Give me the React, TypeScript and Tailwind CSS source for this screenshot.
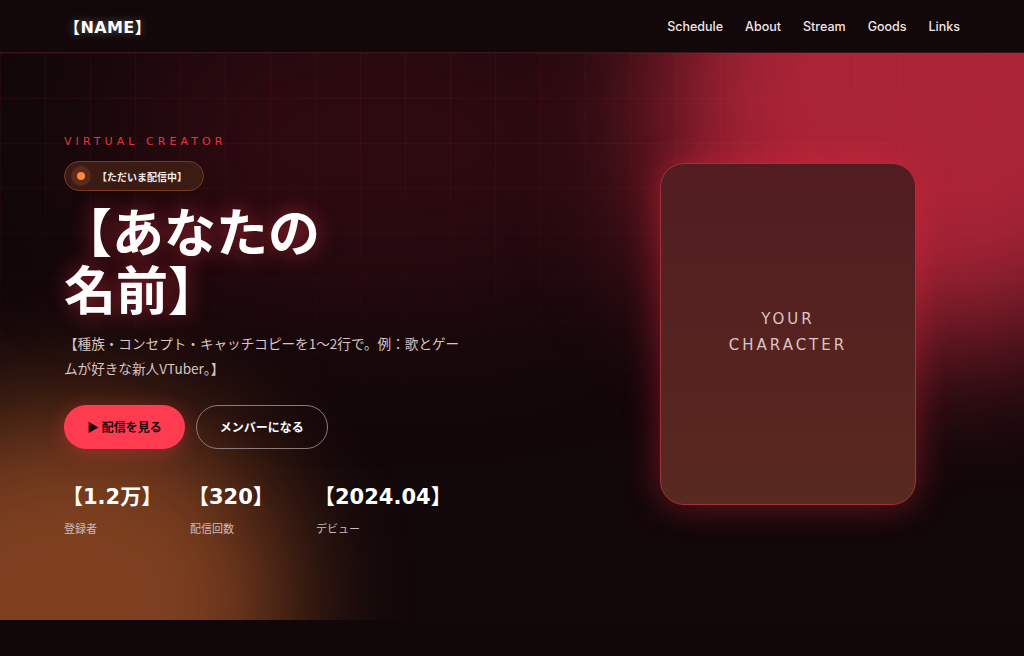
import React from 'react';

const jp = '"Noto Sans CJK JP", "Noto Sans", sans-serif';
const display = '"DejaVu Sans", "Noto Sans CJK JP", sans-serif';

const navItems = ['Schedule', 'About', 'Stream', 'Goods', 'Links'];

const stats = [
  { value: '【1.2万】', label: '登録者' },
  { value: '【320】', label: '配信回数' },
  { value: '【2024.04】', label: 'デビュー' }
];

const Header: React.FC = () => (
  <header className="h-[53px] bg-[#120709] border-b border-[#3a161c]">
    <div className="h-full px-16 pt-[3px] flex items-center justify-between">
      <a
        className="text-white text-[16px] font-bold tracking-wide [text-shadow:0_0_8px_rgba(255,255,255,0.35)]"
        style={{ fontFamily: display }}
      >
        【NAME】
      </a>
      <nav className="flex items-center gap-[22px]">
        {navItems.map((item) => (
          <a
            key={item}
            className="text-[12.5px] font-medium text-[#f2e6e6]"
            style={{ fontFamily: '"Inter", sans-serif' }}
          >
            {item}
          </a>
        ))}
      </nav>
    </div>
  </header>
);

const LiveBadge: React.FC = () => (
  <div className="inline-flex items-center gap-[6px] h-[30px] pl-[6px] pr-[16px] rounded-full bg-[#3a1c14] border border-[#7a3a22]">
    <span className="w-[20px] h-[20px] rounded-full bg-[#5a2a1c] flex items-center justify-center">
      <span className="w-[8px] h-[8px] rounded-full bg-[#ff8a3a]" />
    </span>
    <span className="text-[10px] font-bold text-[#f5ece8]">【ただいま配信中】</span>
  </div>
);

const Hero: React.FC = () => (
  <section className="relative h-[567px] overflow-hidden bg-[#120709]">
    {/* glows */}
    <div className="absolute -top-[170px] right-[-170px] w-[560px] h-[460px] rounded-full bg-[#b3263a] blur-[70px] opacity-95" />
    <div className="absolute top-[-60px] left-[120px] w-[520px] h-[300px] rounded-full bg-[#3a0c14] blur-[80px] opacity-70" />
    <div className="absolute bottom-[-170px] left-[-150px] w-[440px] h-[380px] rounded-full bg-[#8a4622] blur-[60px] opacity-90" />
    {/* grid */}
    <div className="absolute inset-0 bg-[linear-gradient(rgba(255,70,90,0.07)_1px,transparent_1px),linear-gradient(90deg,rgba(255,70,90,0.07)_1px,transparent_1px)] bg-[size:45px_45px] [mask-image:linear-gradient(to_bottom,black,transparent_70%)]" />

    <div className="relative h-full px-16 flex items-center justify-between">
      <div className="w-[408px]" style={{ fontFamily: jp }}>
        <p
          className="text-[11px] tracking-[0.37em] text-[#e8323f] leading-none"
          style={{ fontFamily: display }}
        >
          VIRTUAL CREATOR
        </p>
        <div className="mt-[14px]">
          <LiveBadge />
        </div>
        <h1 className="mt-[10px] text-[52px] font-bold leading-[58px] text-white [text-shadow:0_0_22px_rgba(255,60,80,0.55)]">
          <span className="block -ml-[4px]">【あなたの</span>
          <span className="block">名前】</span>
        </h1>
        <p className="mt-[14px] max-w-[400px] text-[13.6px] leading-[25px] text-[#d6c6c6]">
          【種族・コンセプト・キャッチコピーを1〜2行で。例：歌とゲームが好きな新人VTuber。】
        </p>
        <div className="mt-[24px] flex items-center gap-[11px]">
          <button className="h-[44px] px-[23px] rounded-full bg-[#ff3b50] text-[12px] font-bold text-[#1c080b] shadow-[0_4px_20px_rgba(255,59,80,0.35)]">
            ▶ 配信を見る
          </button>
          <button className="h-[44px] px-[23px] rounded-full border border-[#8a7a7c] text-[12px] font-bold text-white">
            メンバーになる
          </button>
        </div>
        <div className="mt-[38px] flex">
          {stats.map((s) => (
            <div key={s.label} className="w-[126px]">
              <div
                className="text-[21px] font-bold text-white leading-none -ml-[2px] whitespace-nowrap"
                style={{ fontFamily: display }}
              >
                {s.value}
              </div>
              <div className="mt-[12px] text-[11px] text-[#cdbcbc]">{s.label}</div>
            </div>
          ))}
        </div>
      </div>

      <div className="w-[344px] flex justify-center">
        <div className="w-[256px] h-[342px] -mt-[6px] rounded-[24px] border border-[#a4323c] bg-[linear-gradient(180deg,#521c21,#58291f)] shadow-[0_0_36px_rgba(230,40,60,0.45)] flex items-center justify-center">
          <p
            className="text-center text-[15px] leading-[26px] tracking-[0.2em] text-[#dcc4c4] -mt-[4px]"
            style={{ fontFamily: display }}
          >
            YOUR
            <br />
            CHARACTER
          </p>
        </div>
      </div>
    </div>
  </section>
);

export default function App() {
  return (
    <div className="min-h-[656px] bg-[#110709]">
      <Header />
      <Hero />
    </div>
  );
}
